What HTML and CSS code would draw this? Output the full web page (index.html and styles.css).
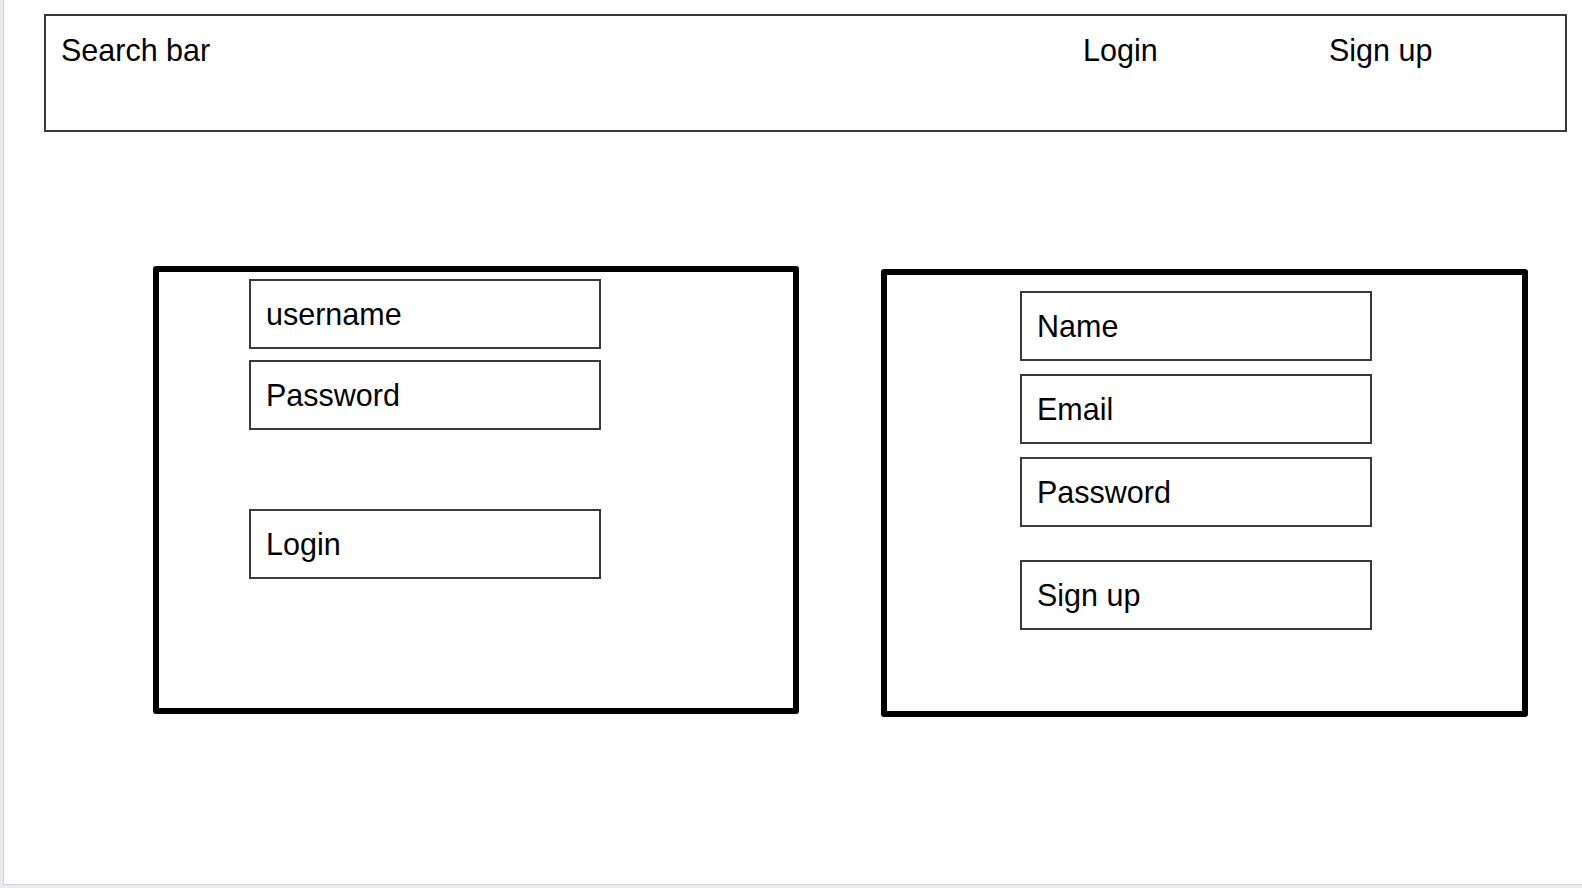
FILE: index.html
```html
<!DOCTYPE html>
<html>
<head>
  <meta charset="UTF-8">
  <title>Login / Sign up</title>
  <link rel="stylesheet" href="styles.css">
</head>
<body>
  <div class="page">
    <div class="header">
      <span class="header-search">Search bar</span>
      <span class="header-link">Login</span>
      <span class="header-link">Sign up</span>
    </div>

    <div class="forms">
      <div class="card card-login">
        <div class="field">username</div>
        <div class="field">Password</div>
        <div class="field field-button">Login</div>
      </div>

      <div class="card card-signup">
        <div class="field">Name</div>
        <div class="field">Email</div>
        <div class="field">Password</div>
        <div class="field field-button">Sign up</div>
      </div>
    </div>
  </div>
</body>
</html>
```

FILE: styles.css
```css
/* whole page: a white sheet on a grey desk */
body {
  margin: 0;
  background-color: #ebebed;
  font-family: 'Liberation Sans', Arial, sans-serif;
  color: #000;
}
.page {
  display: flow-root;       /* keep the header margin inside the sheet */
  margin-left: 3px;
  height: 884px;
  background-color: #fff;
  border-left: 1px solid #d2d2d4;
  border-bottom: 1px solid #d2d2d4;
}

/* top bar */
.header {
  display: grid;
  grid-template-columns: 1fr 246px 236px;
  box-sizing: border-box;
  height: 118px;
  margin: 14px 15px 0 40px;
  padding: 16px 0 0 15px;
  border: 2px solid #3a3a3a;
  font-size: 30.5px;
  line-height: 36px;
}

/* the two boxes */
.forms {
  display: flex;
  align-items: flex-start;
  gap: 82px;
  margin: 134px 0 0 149px;
}
.card {
  display: flex;
  flex-direction: column;
  box-sizing: border-box;
  border: 6px solid #000;
  border-radius: 3px;
}
.card-login {
  width: 646px;
  height: 448px;
  padding: 7px 0 0 90px;
  gap: 11px;
}
.card-signup {
  width: 647px;
  height: 448px;
  margin-top: 3px;
  padding: 16px 0 0 133px;
  gap: 13px;
}
.card-login .field-button {
  margin-top: 68px;
}
.card-signup .field-button {
  margin-top: 20px;
}

/* text fields and buttons look the same */
.field {
  display: flex;
  align-items: center;
  box-sizing: border-box;
  width: 352px;
  height: 70px;
  padding-left: 15px;
  border: 2px solid #3a3a3a;
  font-size: 30.5px;
  line-height: 36px;
}
```
